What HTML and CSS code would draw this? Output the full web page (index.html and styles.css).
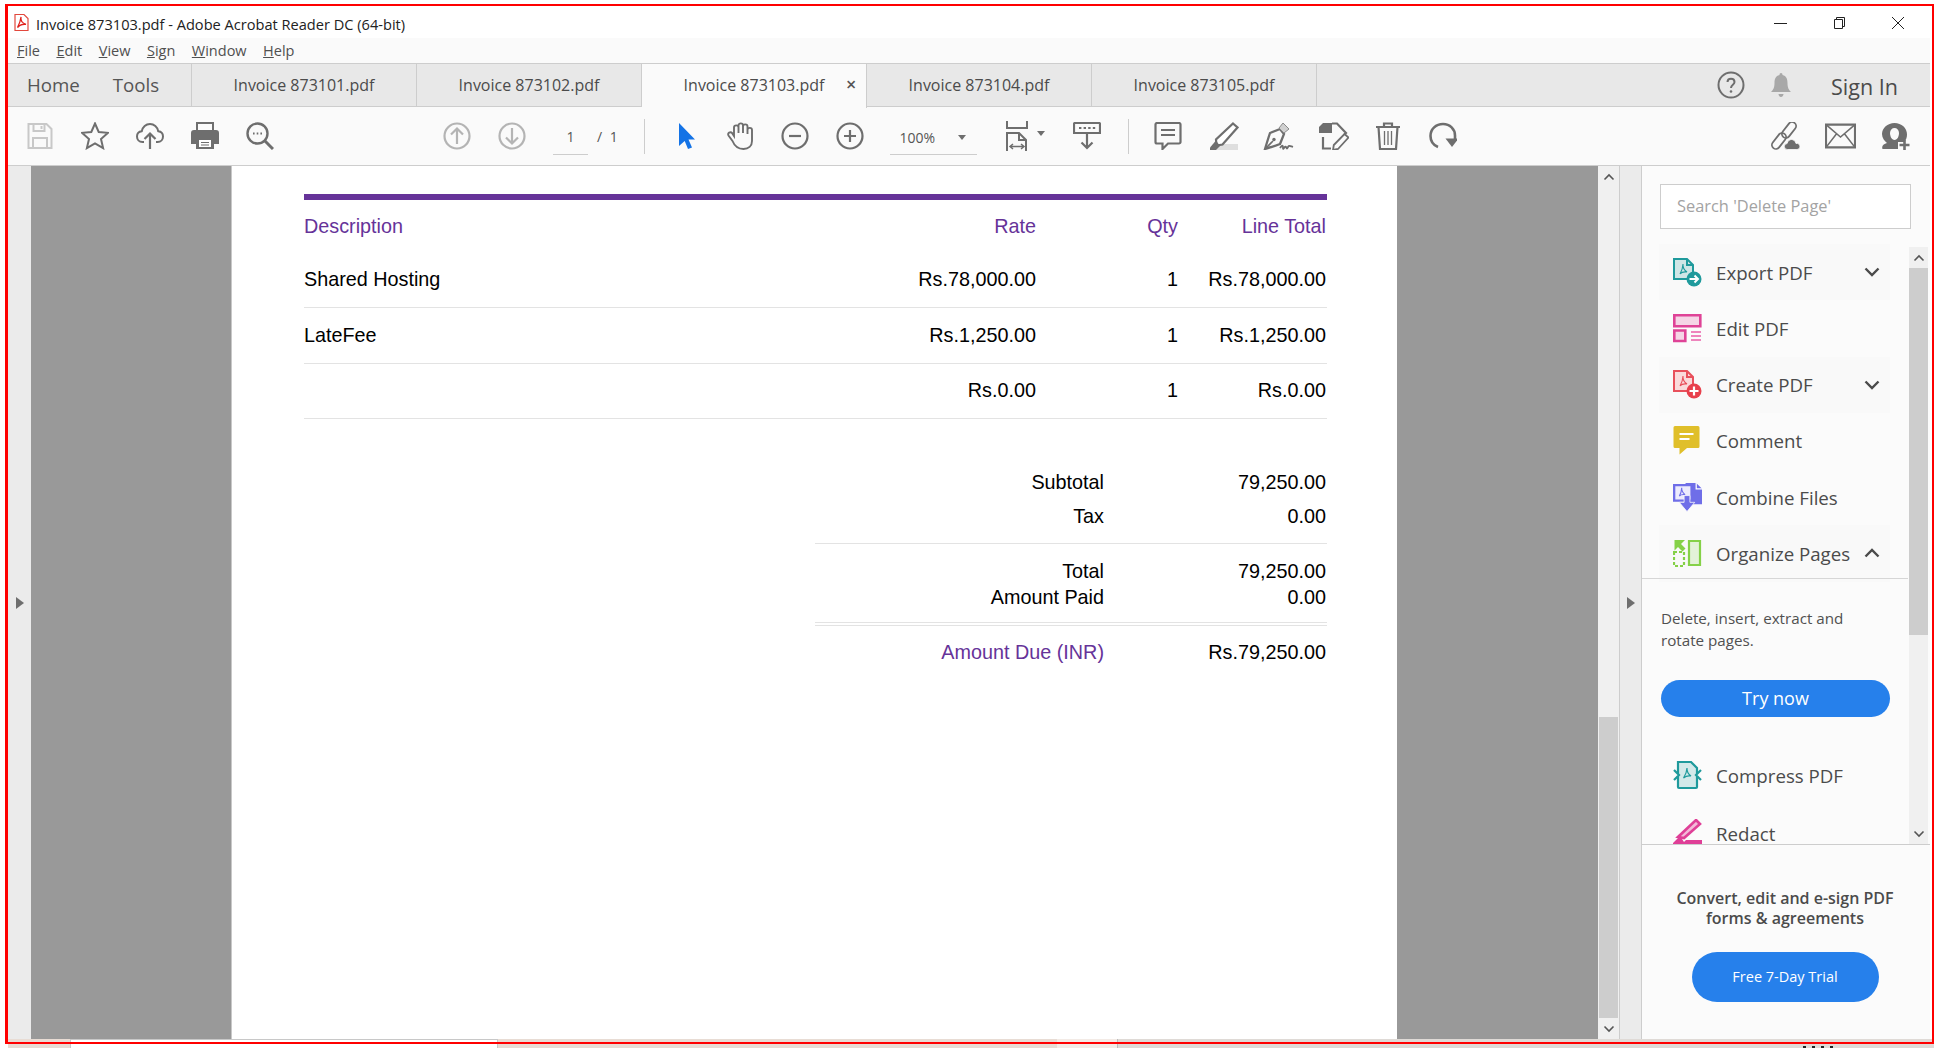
FILE: index.html
```html
<!DOCTYPE html>
<html>
<head>
<meta charset="utf-8"/>
<title>Invoice 873103.pdf - Adobe Acrobat Reader DC (64-bit)</title>
<link rel="stylesheet" href="styles.css">
</head>
<body>
<div class="window">

  <div class="titlebar">
    <svg class="pdf-logo" viewBox="0 0 15 19"><path d="M1 1.500h9l4 4v12H1z" fill="#fff" stroke="#e2483d" stroke-width="1.200"/><path d="M7 4c-.6 3 1.500 6 5 7.300-3-.3-6.500.5-8.500 3.200 1.500-2.700 3-6.500 3.500-10.500z" fill="none" stroke="#e0201b" stroke-width="1.300"/></svg>
    <span class="title-text">Invoice 873103.pdf - Adobe Acrobat Reader DC (64-bit)</span>
    <div class="winbtns">
      <svg viewBox="0 0 14 14" class="winbtn"><path d="M0 7.500h13" stroke="#222" fill="none"/></svg>
      <svg viewBox="0 0 14 14" class="winbtn"><path d="M1.500 3.500h8v9h-8zM3.500 3.500v-2h8v9h-2" stroke="#222" fill="none"/></svg>
      <svg viewBox="0 0 14 14" class="winbtn"><path d="M1 1l12 12M13 1L1 13" stroke="#222" fill="none"/></svg>
    </div>
  </div>

  <div class="menubar">
    <span><u>F</u>ile</span><span><u>E</u>dit</span><span><u>V</u>iew</span><span><u>S</u>ign</span><span><u>W</u>indow</span><span><u>H</u>elp</span>
  </div>

  <div class="tabbar">
    <div class="navtabs"><span>Home</span><span>Tools</span></div>
    <div class="tab">Invoice 873101.pdf</div>
    <div class="tab">Invoice 873102.pdf</div>
    <div class="tab active">Invoice 873103.pdf<span class="tab-close">×</span></div>
    <div class="tab">Invoice 873104.pdf</div>
    <div class="tab">Invoice 873105.pdf</div>
    <div class="tab-right">
      <svg class="help" viewBox="0 0 28 28"><circle cx="14" cy="14" r="12.500" fill="none" stroke="#6e6e6e" stroke-width="2"/><path d="M10.500 11c0-4.500 7-4.500 7 0 0 3-3.500 2.500-3.500 6" fill="none" stroke="#6e6e6e" stroke-width="2"/><circle cx="14" cy="20.500" r="1.300" fill="#6e6e6e"/></svg>
      <svg class="bell" viewBox="0 0 24 26"><path d="M12 1c1 0 1.500.8 1.500 2 4 1 5 4 5 8 0 5 1.500 7 3.500 9H2c2-2 3.500-4 3.500-9 0-4 1-7 5-8 0-1.200.5-2 1.500-2zM9.500 22h5c0 1.500-1 3-2.500 3s-2.500-1.500-2.500-3z" fill="#a8a8a8"/></svg>
      <span class="signin">Sign In</span>
    </div>
  </div>

  <div class="toolbar">
    <div class="tools first">
      <div class="tool"><svg viewBox="0 0 28 28"><path d="M2.500 2h18l5 5v19h-23z M7.500 2v7h11V2 M7 26v-10h14v10" fill="none" stroke="#c8c8c8" stroke-width="2"/><path d="M14.500 4h2v3h-2z" fill="#c8c8c8"/></svg></div>
      <div class="tool"><svg viewBox="0 0 28 28"><path d="M14 1.500l3.700 8.500 9.300.8-7 6.200 2.100 9.100-8.100-4.800-8.100 4.800L8 17l-7-6.200 9.300-.8z" fill="none" stroke="#6e6e6e" stroke-width="2"/></svg></div>
      <div class="tool"><svg viewBox="0 0 28 28"><path d="M8 20H6.500C3 20 1 17.500 1 14.500s2-5 4.800-5.300C6.500 5 10 2 14 2s7.500 3 8.200 7.200c2.800.3 4.800 2.300 4.800 5.300s-2 5.500-5.500 5.500H20" fill="none" stroke="#6e6e6e" stroke-width="2"/><path d="M14 27V12M8.500 17l5.500-5.500 5.500 5.500" fill="none" stroke="#6e6e6e" stroke-width="2.200"/></svg></div>
      <div class="tool"><svg viewBox="0 0 28 28"><path d="M6 1h16v8H6z" fill="none" stroke="#6e6e6e" stroke-width="2"/><path d="M3 8h22a3 3 0 0 1 3 3v11h-5v-6H5v6H0V11a3 3 0 0 1 3-3z" fill="#6e6e6e"/><path d="M5 15h18v12H5z" fill="#6e6e6e"/><path d="M8 18h12v7H8z" fill="#fff"/><path d="M10 20.500h8M10 23h8" stroke="#6e6e6e" stroke-width="1.200"/></svg></div>
      <div class="tool"><svg viewBox="0 0 28 28"><circle cx="11.500" cy="11.500" r="10" fill="none" stroke="#6e6e6e" stroke-width="2.400"/><path d="M18.500 18.500l8.500 8.500" stroke="#6e6e6e" stroke-width="3"/><path d="M7 11.500h1.600M10.700 11.500h1.600M14.400 11.500H16" stroke="#6e6e6e" stroke-width="1.800"/></svg></div>
    </div>
    <div class="tools pager">
      <div class="tool"><svg viewBox="0 0 28 28"><circle cx="14" cy="14" r="12.500" fill="none" stroke="#b4b4b4" stroke-width="2.200"/><path d="M14 22V7M8 12.500L14 6.500l6 6" fill="none" stroke="#b4b4b4" stroke-width="2.200"/></svg></div>
      <div class="tool"><svg viewBox="0 0 28 28"><circle cx="14" cy="14" r="12.500" fill="none" stroke="#b4b4b4" stroke-width="2.200"/><path d="M14 6v15M8 15.500l6 6 6-6" fill="none" stroke="#b4b4b4" stroke-width="2.200"/></svg></div>
    </div>
    <div class="page-box">1</div>
    <div class="page-total">/ 1</div>
    <div class="tb-divider"></div>
    <div class="tools view">
      <div class="tool"><svg viewBox="0 0 28 28"><path d="M7 1l16 16.500h-6.500l3.500 8-4 1.500-3.300-8L7 24z" fill="#1473e6"/></svg></div>
      <div class="tool"><svg viewBox="0 0 28 28"><path d="M5.500 19L1.500 13.500c-1.500-2.500 2-4.500 3.700-2.300L7 14V5.500c0-2.800 4.500-2.800 4.500 0V11V3.500c0-2.800 4.500-2.800 4.500 0V11V4.500c0-2.800 4.500-2.800 4.500 0V12V8c0-2.800 4.500-2.800 4.500 0v11c0 5-3.500 8-8.500 8-5.500 0-9-3-11-8z" fill="none" stroke="#6e6e6e" stroke-width="1.900"/></svg></div>
      <div class="tool"><svg viewBox="0 0 28 28"><circle cx="14" cy="14" r="12.500" fill="none" stroke="#6e6e6e" stroke-width="2.200"/><path d="M8 14h12" stroke="#6e6e6e" stroke-width="2.200"/></svg></div>
      <div class="tool"><svg viewBox="0 0 28 28"><circle cx="14" cy="14" r="12.500" fill="none" stroke="#6e6e6e" stroke-width="2.200"/><path d="M8 14h12M14 8v12" stroke="#6e6e6e" stroke-width="2.200"/></svg></div>
    </div>
    <div class="zoom-box"><span>100%</span><i class="caret"></i></div>
    <div class="fit">
      <svg viewBox="0 0 22 30"><path d="M1 0v7h20V0" fill="none" stroke="#6e6e6e" stroke-width="2"/><path d="M1 30V12h12l7 7v11" fill="none" stroke="#6e6e6e" stroke-width="2"/><path d="M13 12v7h7" fill="none" stroke="#6e6e6e" stroke-width="2"/><path d="M4 25.500h14M7 23l-3 2.500L7 28M15 23l3 2.500-3 2.500" fill="none" stroke="#6e6e6e" stroke-width="1.500"/></svg>
      <i class="caret"></i>
    </div>
    <div class="tool keyb"><svg viewBox="0 0 28 28"><path d="M2 1h24a1 1 0 0 1 1 1v9H1V2a1 1 0 0 1 1-1z" fill="none" stroke="#6e6e6e" stroke-width="2.200"/><path d="M6 6h2.400M10.600 6H13M15.200 6h2.400M19.800 6h2.400" stroke="#6e6e6e" stroke-width="2.200"/><path d="M14 11v15M8.500 20.500L14 26l5.500-5.500" fill="none" stroke="#6e6e6e" stroke-width="2.200"/></svg></div>
    <div class="tb-divider second"></div>
    <div class="tools">
      <div class="tool"><svg viewBox="0 0 28 28"><path d="M3 1h22a1.500 1.500 0 0 1 1.500 1.500V20a1.500 1.500 0 0 1-1.500 1.500H14L8.500 27v-5.500H3A1.500 1.500 0 0 1 1.500 20V2.500A1.500 1.500 0 0 1 3 1z" fill="none" stroke="#6e6e6e" stroke-width="2.200"/><path d="M7 8h14M7 13h14" stroke="#6e6e6e" stroke-width="2"/></svg></div>
      <div class="tool"><svg class="wide" viewBox="0 0 31 28"><path d="M6 22h24v6H3z" fill="#dedede"/><path d="M25 1.500l4.500 4-15 17-6 1-.5-6z" fill="#fff" stroke="#6e6e6e" stroke-width="2.200"/><path d="M8 18.500L2 25.500v2.500h6l4-4z" fill="#6e6e6e"/></svg></div>
      <div class="tool"><svg class="wide" viewBox="0 0 31 28"><path d="M17 7L7 11C5 17 3.500 22 2 27c5-1.500 10-3 15-5l4-10z" fill="none" stroke="#6e6e6e" stroke-width="2.300"/><path d="M2 27l8-8" stroke="#6e6e6e" stroke-width="1.600"/><circle cx="11" cy="17.500" r="1.700" fill="#6e6e6e"/><path d="M16 6l4-5 6 6-5 4z" fill="#d0d0d0" stroke="#8a8a8a"/><path d="M17 26c2-3 3-3 3 0s2-3 3-1 1 2 2 0 2-1 5 0" fill="none" stroke="#6e6e6e" stroke-width="1.800"/></svg></div>
      <div class="tool"><svg class="wide" viewBox="0 0 31 28"><path d="M5 1h9v10H1V5z" fill="#6e6e6e"/><path d="M14 1.500h5l9 9.500-2 2" fill="none" stroke="#6e6e6e" stroke-width="2.200"/><path d="M5 15v11.500h8" fill="none" stroke="#6e6e6e" stroke-width="2.200"/><path d="M26.500 12l4 3.500L20 27l-5 1 .8-5z" fill="#fafafa" stroke="#6e6e6e" stroke-width="1.800"/></svg></div>
      <div class="tool"><svg viewBox="0 0 28 28"><path d="M2 5h24M10 5V1.500h8V5" fill="none" stroke="#6e6e6e" stroke-width="2.200"/><path d="M4.500 5l1.500 22h16l1.500-22" fill="none" stroke="#6e6e6e" stroke-width="2.200"/><path d="M10.500 9v14M14 9v14M17.500 9v14" stroke="#6e6e6e" stroke-width="1.300"/></svg></div>
      <div class="tool"><svg viewBox="0 0 28 28"><path d="M9 25C4 23 1.500 19 1.500 14 1.500 7 7 2 14 2s12 5 12 11.500V18" fill="none" stroke="#6e6e6e" stroke-width="2.600"/><path d="M16.500 16.500h13L23 25z" fill="#6e6e6e"/></svg></div>
    </div>
    <div class="tools share">
      <div class="tool"><svg class="wide" viewBox="0 0 31 28"><rect x="0" y="15" width="18" height="8" rx="4" fill="none" stroke="#6e6e6e" stroke-width="1.800" transform="rotate(-52 9 19)"/><rect x="10" y="4" width="18" height="8" rx="4" fill="none" stroke="#6e6e6e" stroke-width="1.800" transform="rotate(-52 19 8)"/><path d="M17.500 27.500a3 3 0 0 1-.4-6c.6-2.500 2.400-4 4.400-4s3.900 1.500 4.500 4a3 3 0 0 1 3.900 3c0 1.700-1.300 3-3 3z" fill="#6e6e6e" stroke="#fafafa" stroke-width=".8"/></svg></div>
      <div class="tool"><svg class="wide" viewBox="0 0 30 24"><path d="M1 1h28v22H1z" fill="none" stroke="#6e6e6e" stroke-width="2"/><path d="M1 1l14 12L29 1M1 23l10-13M29 23L19 10" fill="none" stroke="#6e6e6e" stroke-width="1.500"/></svg></div>
      <div class="tool"><svg class="wide" viewBox="0 0 30 28"><path d="M14 1c7 0 12.500 5 12.500 11.500 0 3-1 5.500-3 7.500h-6v7H2c-1-3 1-5 4.500-6C4 19 1.500 16 1.500 12 1.500 6 7 1 14 1z" fill="#6e6e6e"/><path d="M9.500 11c0-3 2-5 4.500-5s4.500 2 4.500 5-1.500 7-4.500 7-4.500-4-4.500-7z" fill="#fafafa"/><path d="M19 23h10M24 18v10" stroke="#6e6e6e" stroke-width="2.600"/></svg></div>
    </div>
  </div>

  <div class="workarea">
    <div class="strip"><i class="arrow"></i></div>
    <div class="canvas">
      <div class="page">
        <div class="rule"></div>
        <div class="line line-head"><span>Description</span><span>Rate</span><span>Qty</span><span>Line Total</span></div>
        <div class="line"><span>Shared Hosting</span><span>Rs.78,000.00</span><span>1</span><span>Rs.78,000.00</span></div>
        <div class="line"><span>LateFee</span><span>Rs.1,250.00</span><span>1</span><span>Rs.1,250.00</span></div>
        <div class="line"><span></span><span>Rs.0.00</span><span>1</span><span>Rs.0.00</span></div>
        <div class="totals">
          <div class="sum sum-a">
            <div class="sum-row"><span>Subtotal</span><span>79,250.00</span></div>
            <div class="sum-row spaced"><span>Tax</span><span>0.00</span></div>
          </div>
          <div class="sum sum-b">
            <div class="sum-row"><span>Total</span><span>79,250.00</span></div>
            <div class="sum-row"><span>Amount Paid</span><span>0.00</span></div>
          </div>
          <div class="sum sum-c">
            <div class="sum-row"><span class="due">Amount Due (INR)</span><span>Rs.79,250.00</span></div>
          </div>
        </div>
      </div>
    </div>
    <div class="vscroll">
      <div class="sc-btn"><svg viewBox="0 0 12 8"><path d="M1.500 6.500L6 2l4.500 4.500" fill="none" stroke="#555" stroke-width="1.600"/></svg></div>
      <div class="sc-track"><div class="sc-thumb"></div></div>
      <div class="sc-btn"><svg viewBox="0 0 12 8"><path d="M1.500 1.500L6 6l4.500-4.500" fill="none" stroke="#555" stroke-width="1.600"/></svg></div>
    </div>
    <div class="strip strip-r"><i class="arrow"></i></div>

    <div class="panel">
      <div class="search"><div class="search-box">Search 'Delete Page'</div></div>
      <div class="panel-mid">
        <div class="tool-list">
          <div class="row shaded">
            <svg viewBox="0 0 29 29"><path d="M1 1h13l6 6v14H1z" fill="#cfe6e6" stroke="#1f9a9c" stroke-width="2"/><path d="M14 1v6h6" fill="none" stroke="#1f9a9c" stroke-width="2"/><path d="M10 6c-.3 3 1 6 4 8-3-.5-5.500.2-7 2 1.500-2.500 2.800-6 3-10z" fill="none" stroke="#1f9a9c" stroke-width="1.100"/><circle cx="21" cy="21" r="7.500" fill="#1f9a9c"/><path d="M16.500 21h8M21.500 17.500L25 21l-3.500 3.500" fill="none" stroke="#fff" stroke-width="2"/></svg>
            <span>Export PDF</span><svg class="chev" viewBox="0 0 16 10"><path d="M1.500 1.500L8 8l6.500-6.500" fill="none" stroke="#4b4b4b" stroke-width="2.400"/></svg>
          </div>
          <div class="row">
            <svg viewBox="0 0 29 29"><path d="M1.300 1.300h26v11h-26z" fill="#f5d5e6" stroke="#df4397" stroke-width="2.600"/><path d="M1.300 16.500h11v10.500h-11z" fill="#f5d5e6" stroke="#df4397" stroke-width="2.600"/><path d="M18 18h10M18 22h10M18 26h10" stroke="#ea5fa9" stroke-width="1.500"/></svg>
            <span>Edit PDF</span>
          </div>
          <div class="row shaded">
            <svg viewBox="0 0 29 29"><path d="M1 1h13l6 6v14H1z" fill="#fadadb" stroke="#e8505b" stroke-width="2"/><path d="M14 1v6h6" fill="none" stroke="#e8505b" stroke-width="2"/><path d="M10 6c-.3 3 1 6 4 8-3-.5-5.500.2-7 2 1.500-2.500 2.800-6 3-10z" fill="none" stroke="#e8505b" stroke-width="1.100"/><circle cx="21" cy="21" r="7.500" fill="#e8404c"/><path d="M16.500 21h9M21 16.500v9" stroke="#fff" stroke-width="2.200"/></svg>
            <span>Create PDF</span><svg class="chev" viewBox="0 0 16 10"><path d="M1.500 1.500L8 8l6.500-6.500" fill="none" stroke="#4b4b4b" stroke-width="2.400"/></svg>
          </div>
          <div class="row">
            <svg viewBox="0 0 29 29"><path d="M2 0h23a1.500 1.500 0 0 1 1.500 1.500v19A1.500 1.500 0 0 1 25 22H14l-7.500 6.500V22H2A1.500 1.500 0 0 1 .5 20.500v-19A1.500 1.500 0 0 1 2 0z" fill="#e0bf2a"/><path d="M6.500 8h14M6.500 13h10" stroke="#fff" stroke-width="2"/></svg>
            <span>Comment</span>
          </div>
          <div class="row">
            <svg viewBox="0 0 30 30"><path d="M13 0h11l6 6v16H13z" fill="#6f6ee8"/><path d="M24 0v6h6" fill="none" stroke="#fff" stroke-width="1.300"/><path d="M1.200 2.200h18v16h-18z" fill="#ecebfd" stroke="#6f6ee8" stroke-width="2.400"/><path d="M9 5c-.2 3 .8 5 3.500 7-2.800-.4-4.700.2-6 1.500C8 11.500 8.800 8 9 5z" fill="none" stroke="#6f6ee8" stroke-width="1.100"/><path d="M11.500 13h6v7h5l-8 9.500-8-9.500h5z" fill="#6f6ee8" stroke="#fbfbfb" stroke-width=".8"/></svg>
            <span>Combine Files</span>
          </div>
          <div class="row shaded row-open">
            <svg viewBox="0 0 29 29"><path d="M16 2h11v24H16z" fill="#e3f2d8" stroke="#85d148" stroke-width="2.200"/><path d="M1 13h10v14H1z" fill="none" stroke="#85d148" stroke-width="2.200" stroke-dasharray="3 2"/><path d="M12 1L1.500 1 1.500 11.500 5 8l4.500 4.500 3-3L8 5z" fill="#85d148"/></svg>
            <span>Organize Pages</span><svg class="chev" viewBox="0 0 16 10"><path d="M1.500 8.500L8 2l6.500 6.500" fill="none" stroke="#4b4b4b" stroke-width="2.400"/></svg>
          </div>
          <div class="desc">
            <p>Delete, insert, extract and rotate pages.</p>
            <div class="try-btn">Try now</div>
          </div>
          <div class="row row-compress">
            <svg viewBox="0 0 29 29"><path d="M5 6V1h13l6 6v19a1 1 0 0 1-1 1H6a1 1 0 0 1-1-1v-5z" fill="#d3e9e9" stroke="#1f9a9c" stroke-width="2.200"/><path d="M14 7c-.2 3 1.200 6 4 8-3-.6-5.500.2-7.500 2 1.700-2.500 3.300-6 3.500-10z" fill="none" stroke="#1f9a9c" stroke-width="1.200"/><path d="M1 9l5 5-5 5M28 9l-5 5 5 5" fill="#fbfbfb" stroke="#1f9a9c" stroke-width="2.200"/></svg>
            <span>Compress PDF</span>
          </div>
          <div class="row">
            <svg viewBox="0 0 29 29"><path d="M23 1l4 4-16 14-6-1z" fill="#f3b9d8" stroke="#df3f97" stroke-width="2.600"/><path d="M7 17L0 24v5h29v-8H13l-2 2z" fill="#df3f97"/></svg>
            <span>Redact</span>
          </div>
        </div>
        <div class="list-scroll">
          <div class="sc-btn"><svg viewBox="0 0 12 8"><path d="M1.500 6.500L6 2l4.500 4.500" fill="none" stroke="#555" stroke-width="1.600"/></svg></div>
          <div class="ls-track"><div class="ls-thumb"></div></div>
          <div class="sc-btn"><svg viewBox="0 0 12 8"><path d="M1.500 1.500L6 6l4.500-4.500" fill="none" stroke="#555" stroke-width="1.600"/></svg></div>
        </div>
      </div>
      <div class="panel-foot">
        <p>Convert, edit and e-sign PDF<br>forms &amp; agreements</p>
        <div class="trial-btn">Free 7-Day Trial</div>
      </div>
    </div>
  </div>

  <div class="frame"></div>
</div>

<div class="taskstrip">
  <div class="ts ts-a"></div>
  <div class="ts ts-b"></div>
  <div class="ts ts-c"></div>
  <div class="ts ts-d"></div>
  <div class="ts ts-e"><div class="clock"><i></i><i></i><i></i><i></i></div></div>
</div>
</body>
</html>
```

FILE: styles.css
```css
html, body {
  margin: 0;
  padding: 0;
  background: #fff;
  width: 1938px;
  height: 1048px;
  overflow: hidden;
}

body {
  font-family: "Open Sans", "Noto Sans", sans-serif;
  color: #4b4b4b;
}

.window {
  width: 1922px;
  height: 1039px;
  margin-left: 8px;
  display: flex;
  flex-direction: column;
}

/* red marker drawn around the window in the screenshot */
.frame {
  position: absolute;
  left: 5px;
  top: 4px;
  width: 1924px;
  height: 1036px;
  border: 2px solid #f00;
  border-left-width: 3px;
  pointer-events: none;
  z-index: 2;
}

.titlebar {
  height: 38px;
  flex: none;
  box-sizing: border-box;
  padding-top: 13px;
  padding-left: 6px;
  display: flex;
  align-items: flex-start;
  background: #fff;
}

.pdf-logo {
  width: 15px;
  height: 19px;
  flex: none;
}

.title-text {
  font-size: 14.6px;
  line-height: 22px;
  margin-left: 7px;
  color: #222;
}

.winbtns {
  margin-left: auto;
  margin-top: 3px;
  margin-right: 25px;
  display: flex;
  gap: 44.5px;
}

.winbtn {
  width: 14px;
  height: 14px;
}

.menubar {
  height: 25px;
  flex: none;
  background: #fafafa;
  display: flex;
  padding-left: 9px;
  gap: 16.5px;
  font-size: 14.5px;
  line-height: 26px;
  color: #505050;
}

.tabbar {
  height: 44px;
  flex: none;
  box-sizing: border-box;
  background: #e8e8e8;
  border-top: 1px solid #cdcdcd;
  border-bottom: 1px solid #cdcdcd;
  display: flex;
}

.navtabs {
  width: 184px;
  box-sizing: border-box;
  padding-left: 19px;
  display: flex;
  gap: 33px;
  font-size: 18.7px;
  line-height: 42px;
  color: #555;
  border-right: 1px solid #cdcdcd;
}

.tab {
  width: 225px;
  box-sizing: border-box;
  border-right: 1px solid #cdcdcd;
  text-align: center;
  font-size: 16px;
  line-height: 42px;
  color: #4b4b4b;
  position: relative;
}

.tab.active {
  background: #fafafa;
  height: 44px;
}

.tab-close {
  position: absolute;
  left: 204px;
  top: -1px;
  font-size: 18px;
  color: #555;
  font-weight: 600;
}

.tab-right {
  flex: 1;
  display: flex;
  align-items: center;
}

.help {
  width: 28px;
  height: 28px;
  margin-left: 400px;
}

.bell {
  width: 24px;
  height: 26px;
  margin-left: 24px;
}

.signin {
  font-size: 21.5px;
  margin-left: 38px;
  margin-top: 2px;
  color: #4b4b4b;
}

.toolbar {
  height: 59px;
  flex: none;
  box-sizing: border-box;
  background: #fafafa;
  border-bottom: 1px solid #cdcdcd;
  display: flex;
  align-items: center;
  padding-left: 4.5px;
}

.tools {
  display: flex;
}

.tool {
  width: 55px;
  height: 30px;
  display: flex;
  align-items: center;
  justify-content: center;
  flex: none;
}

.tool svg {
  width: 28px;
  height: 28px;
}

.tool svg.wide {
  width: 31px;
}

.tools.pager {
  margin-left: 142px;
}

.tools.view .tool {
  width: 54.5px;
}

.page-box {
  width: 35px;
  margin-left: 13.5px;
  height: 35px;
  margin-top: 3px;
  box-sizing: border-box;
  border-bottom: 1px solid #cdcdcd;
  text-align: center;
  font-size: 14px;
  line-height: 34px;
  color: #555;
}

.page-total {
  width: 22px;
  margin-left: 9px;
  font-size: 14px;
  word-spacing: 4px;
  color: #555;
  white-space: nowrap;
}

.tb-divider {
  width: 1px;
  height: 35px;
  background: #cdcdcd;
  margin-left: 25px;
  margin-right: 14px;
}

.tb-divider.second {
  margin-left: 13.5px;
  margin-right: 11.5px;
}

.zoom-box {
  width: 87px;
  height: 35px;
  margin-left: 12.5px;
  margin-top: 3px;
  box-sizing: border-box;
  border-bottom: 1px solid #cdcdcd;
  display: flex;
  align-items: center;
  padding-left: 10px;
  font-size: 14px;
  color: #555;
}

.caret {
  display: block;
  width: 0;
  height: 0;
  border-left: 4px solid transparent;
  border-right: 4px solid transparent;
  border-top: 5px solid #6e6e6e;
}

.zoom-box .caret {
  margin-left: 23px;
}

.fit {
  display: flex;
  align-items: center;
  margin-left: 29px;
  width: 54px;
}

.fit svg {
  width: 22px;
  height: 30px;
  flex: none;
}

.fit .caret {
  margin-left: 9px;
  margin-bottom: 6px;
}

.tools.share {
  margin-left: auto;
  margin-right: 7px;
}

/* document area */
.workarea {
  flex: 1;
  display: flex;
  min-height: 0;
}

.strip {
  width: 23px;
  flex: none;
  background: #ebebeb;
  display: flex;
  align-items: center;
  justify-content: center;
}

.arrow {
  display: block;
  width: 0;
  height: 0;
  border-top: 6px solid transparent;
  border-bottom: 6px solid transparent;
  border-left: 8px solid #6e6e6e;
}

.strip-r {
  width: 21px;
  border-left: 1px solid #cdcdcd;
  border-right: 1px solid #cdcdcd;
}

.canvas {
  width: 1567px;
  flex: none;
  box-sizing: border-box;
  padding-right: 1px;
  background: #999;
  display: flex;
  justify-content: center;
}

.page {
  width: 1166px;
  box-sizing: border-box;
  background: #fff;
  border-left: 1px solid #c8c8c8;
  padding: 28px 70px 0 72px;
  font-family: "Liberation Sans", Arial, sans-serif;
  font-size: 19.8px;
  color: #000;
}

.rule {
  height: 6px;
  background: #663399;
}

.line {
  display: grid;
  grid-template-columns: 1fr 300px 142px 149px;
  height: 53.4px;
  padding-bottom: 1px;
  align-items: center;
  border-bottom: 1px solid #e3e3e3;
}

.line > span + span {
  text-align: right;
}

.line > span:last-child {
  padding-right: 1px;
}

.line-head {
  height: 53px;
  padding-bottom: 0;
  border-bottom: 0;
  color: #663399;
}

.totals {
  margin-left: 511px;
  padding-top: 50px;
}

.sum-row {
  display: grid;
  grid-template-columns: 289px 1fr;
  text-align: right;
  height: 26px;
  line-height: 26px;
  padding-right: 1px;
}

.sum-row.spaced {
  margin-top: 8px;
}

.sum-a {
  padding-bottom: 14px;
  border-bottom: 1px solid #e3e3e3;
}

.sum-b {
  padding-top: 14px;
  padding-bottom: 12px;
  border-bottom: 1px solid #e3e3e3;
}

.sum-c {
  margin-top: 2px;
  border-top: 1px solid #e3e3e3;
  padding-top: 13px;
}

.due {
  color: #663399;
}

.vscroll {
  width: 21px;
  flex: none;
  display: flex;
  flex-direction: column;
  background: #f0f0f0;
}

.sc-btn {
  height: 21px;
  flex: none;
  display: flex;
  align-items: center;
  justify-content: center;
  background: #f0f0f0;
}

.sc-btn svg {
  width: 12px;
  height: 8px;
}

.sc-track {
  flex: 1;
  position: relative;
}

/* page scroll thumb */
.sc-thumb {
  position: absolute;
  left: 1px;
  width: 19px;
  top: 530px;
  bottom: 0;
  background: #cdcdcd;
}

/* tools panel */
.panel {
  flex: 1;
  min-width: 0;
  background: #fbfbfb;
  display: flex;
  flex-direction: column;
}

.search {
  height: 78px;
  flex: none;
  box-sizing: border-box;
  padding: 18px 0 0 18px;
}

.search-box {
  width: 251px;
  height: 45px;
  box-sizing: border-box;
  border: 1px solid #cdcdcd;
  background: #fff;
  padding-left: 16px;
  font-size: 16.4px;
  line-height: 42px;
  color: #a3a3a3;
}

.panel-mid {
  height: 600px;
  flex: none;
  display: flex;
  border-bottom: 1px solid #cdcdcd;
  overflow: hidden;
}

.tool-list {
  width: 266px;
  flex: none;
  overflow: hidden;
  height: 600px;
}

.row {
  height: 56.25px;
  margin-left: 17px;
  width: 231px;
  box-sizing: border-box;
  padding-left: 14px;
  display: flex;
  align-items: center;
  font-size: 18.7px;
  color: #4b4b4b;
}

.row > svg:first-child {
  width: 29px;
  height: 29px;
  flex: none;
  margin-right: 14px;
}

.row.shaded {
  background: #f9f9f9;
}

.chev {
  width: 16px;
  height: 10px;
  margin-left: auto;
  margin-right: 10px;
}

.row-open {
  margin-bottom: -3.5px;
}

.row-compress {
  margin-bottom: 2px;
}

.desc {
  border-top: 1px solid #d6d6d6;
  position: relative;
  padding: 28px 0 30px 19px;
}

.desc p {
  margin: 0;
  width: 200px;
  font-size: 15.2px;
  line-height: 22px;
  color: #505050;
}

.try-btn {
  width: 229px;
  height: 37px;
  margin-top: 29px;
  border-radius: 19px;
  background: #2680eb;
  color: #fff;
  text-align: center;
  font-size: 18px;
  line-height: 37px;
}

.list-scroll {
  width: 19px;
  height: 597px;
  margin-top: 3px;
  margin-left: 1px;
  flex: none;
  display: flex;
  flex-direction: column;
  background: #f0f0f0;
}

.ls-track {
  flex: 1;
}

.ls-thumb {
  height: 367px;
  background: #cdcdcd;
}

.panel-foot {
  flex: 1;
  box-sizing: border-box;
  padding: 43px 2px 0 0;
  text-align: center;
}

.panel-foot p {
  margin: 0;
  font-size: 16px;
  font-weight: 600;
  line-height: 20px;
  color: #4b4b4b;
}

.trial-btn {
  width: 187px;
  height: 50px;
  margin: 24px auto 0;
  border-radius: 25px;
  background: #2680eb;
  color: #fff;
  font-size: 14.5px;
  line-height: 50px;
}

/* bit of the desktop showing under the window */
.taskstrip {
  height: 9px;
  width: 1926px;
  margin-left: 8px;
  display: flex;
  overflow: hidden;
}

.ts {
  height: 9px;
  flex: none;
  box-sizing: border-box;
}

.ts-a { width: 62px; background: #e8dcd4; }
.ts-b { width: 428px; background: #fff; border: 1px solid #c8c8c8; border-bottom: 0; }
.ts-c { width: 559px; background: #e8dcd4; }
.ts-d { width: 61px; background: #f3ebe6; border-right: 1px solid #bbb; }
.ts-e { width: 816px; background: #dfdad6; padding: 7px 0 0 685px; }

.clock {
  display: flex;
  gap: 6px;
}

.clock i {
  display: block;
  width: 3px;
  height: 2px;
  background: #222;
}
```
